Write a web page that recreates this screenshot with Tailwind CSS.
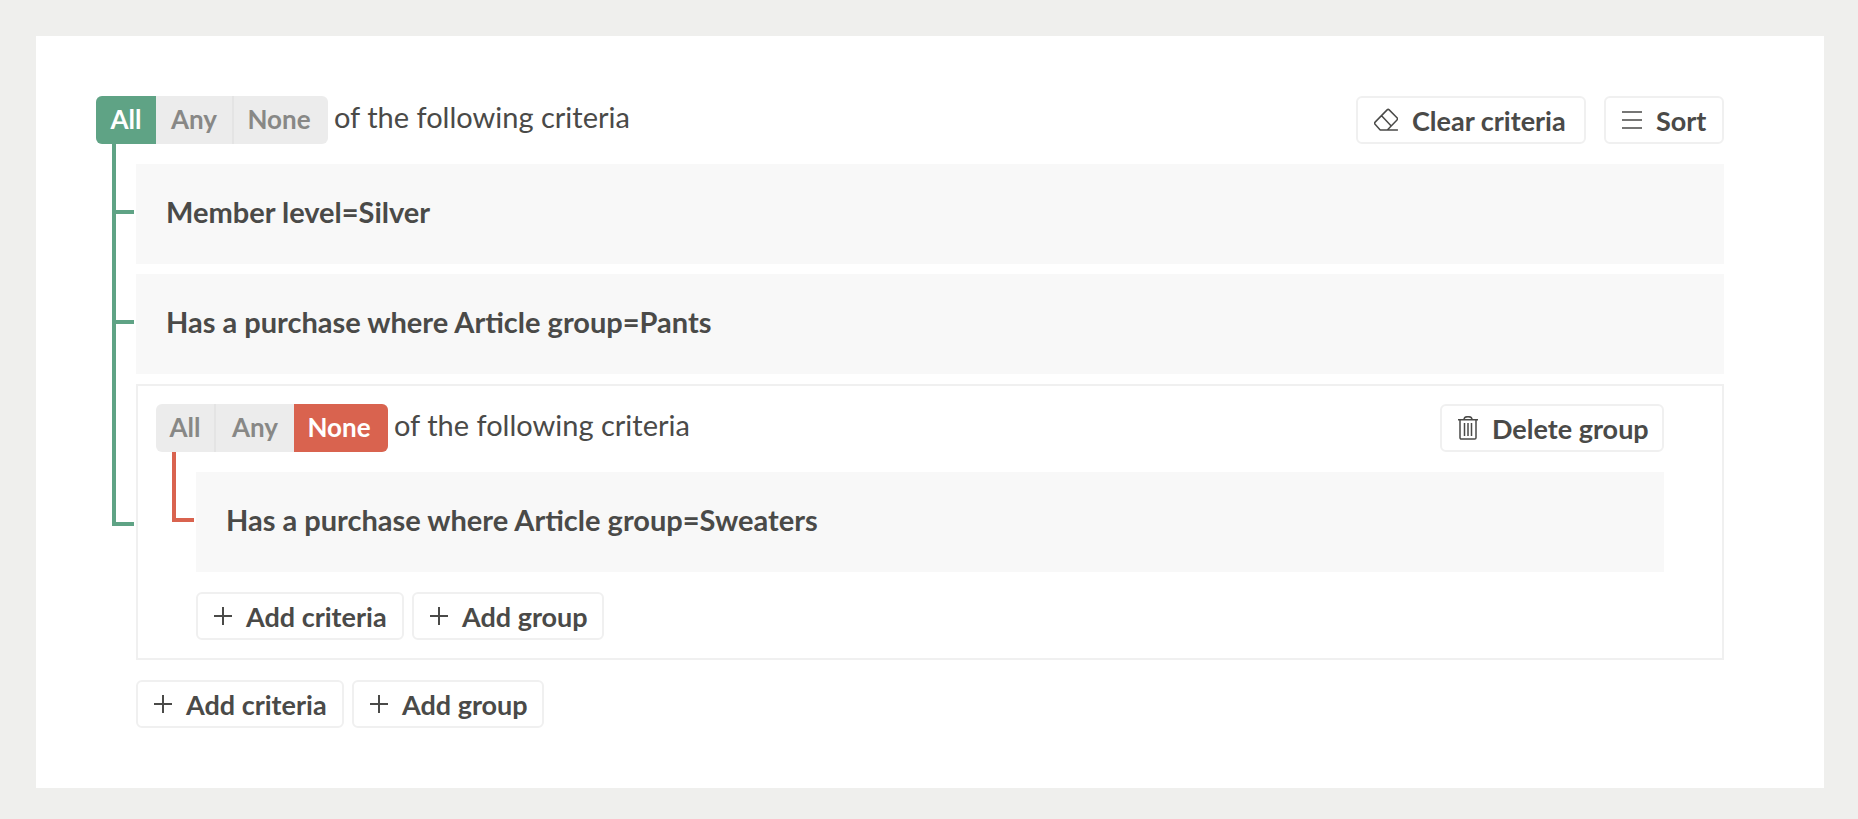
<!DOCTYPE html>
<html lang="en">
<head>
<meta charset="utf-8">
<meta name="viewport" content="width=device-width, initial-scale=1">
<title>Criteria</title>
<script src="https://cdn.jsdelivr.net/npm/@tailwindcss/browser@4"></script>
</head>
<body class="min-h-screen bg-[#efefed] pt-9 pr-[34px] pb-[31px] pl-9 font-['Lato',sans-serif] text-[#4a4a48]">
<svg class="hidden">
  <symbol id="plus" viewBox="0 0 18 18"><path d="M9 0v18M0 9h18" fill="none" stroke="currentColor" stroke-width="2"/></symbol>
</svg>
<main class="bg-white py-[60px] pr-[100px] pl-[60px]">
  <header class="flex items-center justify-between">
    <div class="flex items-center gap-1.5">
      <div role="group" aria-label="Match mode" class="flex h-12 overflow-hidden rounded-md bg-[#ececec] text-[26px] font-bold text-[#888886]">
        <button type="button" aria-pressed="true" class="w-[60px] bg-[#5fa385] pb-0.5 text-white">All</button>
        <button type="button" aria-pressed="false" class="w-[78px] border-r-2 border-[#e4e4e4] pb-0.5">Any</button>
        <button type="button" aria-pressed="false" class="w-[94px] pr-1 pb-0.5">None</button>
      </div>
      <span class="pb-1.5 text-[29px] leading-9">of the following criteria</span>
    </div>
    <div class="flex gap-[18px] text-[27px] font-bold">
      <button type="button" class="flex h-12 min-w-[230px] items-center gap-3.5 rounded-md border-2 border-[#f0f0f0] pr-3 pl-4">
        <svg class="h-6 w-6" viewBox="0 0 24 24" fill="none" stroke="currentColor" stroke-width="1.5" stroke-linejoin="round" stroke-linecap="round"><path d="M6.200 22 1.100 16.200a1.500 1.500 0 0 1 0-2.100L13.100 1.900a1.500 1.500 0 0 1 2.100 0l7.800 7.900a1.500 1.500 0 0 1 0 2.100L13.800 21.500M7.600 7.800 17 17.800M6.200 22H23.500"/></svg>
        <span class="pt-0.5">Clear criteria</span>
      </button>
      <button type="button" class="flex h-12 min-w-[120px] items-center gap-3.5 rounded-md border-2 border-[#f0f0f0] pr-3 pl-4">
        <svg class="h-5 w-5" viewBox="0 0 20 20" fill="none" stroke="currentColor" stroke-width="1.5"><path d="M0 2h20M0 10h20M0 18h20"/></svg>
        <span class="pt-0.5">Sort</span>
      </button>
    </div>
  </header>

  <ul class="mt-5 ml-10 flex flex-col gap-2.5">
    <li class="relative flex h-[100px] items-center bg-[#f8f8f8] px-[30px] text-[29px] font-bold">
      <span class="absolute -top-5 bottom-1/2 -left-6 w-[22px] border-b-4 border-l-4 border-[#5fa385]"></span>
      <span class="pb-1">Member level=Silver</span>
    </li>
    <li class="relative flex h-[100px] items-center bg-[#f8f8f8] px-[30px] text-[29px] font-bold">
      <span class="absolute -top-[60px] bottom-1/2 -left-6 w-[22px] border-b-4 border-l-4 border-[#5fa385]"></span>
      <span class="pb-1">Has a purchase where Article group=Pants</span>
    </li>
    <li class="relative border-2 border-[#f0f0f0] py-[18px] pr-[58px] pl-[18px]">
      <span class="absolute -top-[62px] bottom-[calc(50%-4px)] -left-[26px] w-[22px] border-b-4 border-l-4 border-[#5fa385]"></span>
      <div class="flex items-center justify-between">
        <div class="flex items-center gap-1.5">
          <div role="group" aria-label="Group match mode" class="flex h-12 overflow-hidden rounded-md bg-[#ececec] text-[26px] font-bold text-[#888886]">
            <button type="button" aria-pressed="false" class="w-[60px] border-r-2 border-[#e4e4e4] pb-0.5">All</button>
            <button type="button" aria-pressed="false" class="w-[78px] pb-0.5">Any</button>
            <button type="button" aria-pressed="true" class="w-[94px] bg-[#d9634f] pr-1 pb-0.5 text-white">None</button>
          </div>
          <span class="pb-1.5 text-[29px] leading-9">of the following criteria</span>
        </div>
        <button type="button" class="flex h-12 min-w-[224px] items-center gap-3.5 rounded-md border-2 border-[#f0f0f0] pr-3 pl-4 text-[27px] font-bold">
          <svg class="h-6 w-5" viewBox="0 0 20 24" fill="none" stroke="currentColor" stroke-width="1.5"><path d="M0 3.700h20M6 3.700c0-2 1.500-3 4-3s4 1 4 3M2 3.700v18a1.300 1.300 0 0 0 1.300 1.300h13.400a1.300 1.300 0 0 0 1.300-1.300v-18M6.500 7v13M10 7v13M13.500 7v13"/></svg>
          <span class="pt-0.5">Delete group</span>
        </button>
      </div>
      <ul class="mt-5 ml-10">
        <li class="relative flex h-[100px] items-center bg-[#f8f8f8] px-[30px] text-[29px] font-bold">
          <span class="absolute -top-5 bottom-1/2 -left-6 w-[22px] border-b-4 border-l-4 border-[#d9634f]"></span>
          <span class="pb-1">Has a purchase where Article group=Sweaters</span>
        </li>
      </ul>
      <div class="mt-5 ml-10 flex gap-2 text-[27px] font-bold">
        <button type="button" class="flex h-12 min-w-[208px] items-center gap-3.5 rounded-md border-2 border-[#f0f0f0] pr-3 pl-4"><svg class="h-[18px] w-[18px]"><use href="#plus"/></svg><span class="pt-0.5">Add criteria</span></button>
        <button type="button" class="flex h-12 min-w-[192px] items-center gap-3.5 rounded-md border-2 border-[#f0f0f0] pr-3 pl-4"><svg class="h-[18px] w-[18px]"><use href="#plus"/></svg><span class="pt-0.5">Add group</span></button>
      </div>
    </li>
  </ul>
  <div class="mt-5 ml-10 flex gap-2 text-[27px] font-bold">
    <button type="button" class="flex h-12 min-w-[208px] items-center gap-3.5 rounded-md border-2 border-[#f0f0f0] pr-3 pl-4"><svg class="h-[18px] w-[18px]"><use href="#plus"/></svg><span class="pt-0.5">Add criteria</span></button>
    <button type="button" class="flex h-12 min-w-[192px] items-center gap-3.5 rounded-md border-2 border-[#f0f0f0] pr-3 pl-4"><svg class="h-[18px] w-[18px]"><use href="#plus"/></svg><span class="pt-0.5">Add group</span></button>
  </div>
</main>
</body>
</html>
